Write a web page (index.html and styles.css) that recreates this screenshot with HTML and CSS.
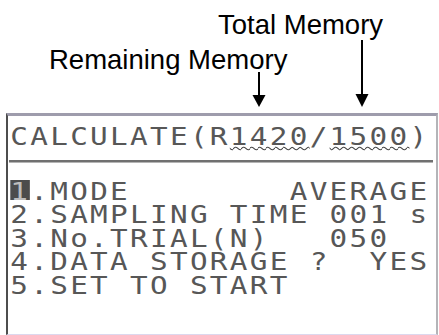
FILE: index.html
```html
<!DOCTYPE html>
<html>
<head>
<meta charset="utf-8">
<link rel="stylesheet" href="styles.css">
</head>
<body>
<div class="header">
  <div class="label label-total">Total Memory</div>
  <div class="label label-remaining">Remaining Memory</div>
  <svg class="arrows" width="439" height="113" viewBox="0 0 439 113">
    <line x1="259" y1="72" x2="259" y2="96" stroke="#000" stroke-width="2"/>
    <polygon points="252.5,95 265.5,95 259,107" fill="#000"/>
    <line x1="362" y1="40" x2="362" y2="95" stroke="#000" stroke-width="2"/>
    <polygon points="355.5,94 368.5,94 362,107" fill="#000"/>
  </svg>
</div>
<div class="screen">
  <div class="line title">CALCULATE(R<span class="mem">1420</span>/<span class="mem">1500</span>)</div>
  <div class="sep"></div>
  <div class="menu">
    <div class="line"><span class="cursor">1</span>.MODE        AVERAGE</div>
    <div class="line">2.SAMPLING TIME 001 s</div>
    <div class="line">3.No.TRIAL(N)   050</div>
    <div class="line">4.DATA STORAGE ?  YES</div>
    <div class="line">5.SET TO START</div>
  </div>
</div>
</body>
</html>
```

FILE: styles.css
```css
html, body {
  margin: 0;
  padding: 0;
  background: #fff;
}
body {
  width: 439px;
  height: 335px;
  overflow: hidden;
}
.header {
  position: relative;
  height: 113px;
  padding-top: 7px;
  box-sizing: border-box;
  font-family: "Liberation Sans", Arial, sans-serif;
  font-size: 27.5px;
  line-height: 35px;
  color: #000;
}
.label-total {
  margin-left: 218px;
}
.label-remaining {
  margin-left: 49px;
}
.arrows {
  position: absolute;
  left: 0;
  top: 0;
}
.screen {
  margin-left: 6px;
  width: 432px;
  height: 222px;
  box-sizing: border-box;
  overflow: hidden;
  border-top: 3px solid #9e9cac;
  border-left: 2px solid #4e4e4e;
  border-right: 2px solid #b4b4b8;
  border-bottom: 1px solid #dcd8ee;
  padding-top: 9px;
  font-family: "DejaVu Sans Mono", monospace;
  font-size: 25.5px;
  color: #575757;
}
.line {
  width: 366px;
  white-space: pre;
  line-height: 23.5px;
  letter-spacing: 2px;
  padding-left: 2px;
  transform: scaleX(1.15);
  transform-origin: 0 0;
}
.mem {
  text-decoration: underline wavy #444;
  text-decoration-thickness: 1px;
  text-underline-offset: 1px;
}
.sep {
  margin: 11px 3px 0 1px;
  height: 2px;
  background: #707070;
  border-bottom: 1px solid #b4b4b4;
}
.menu {
  margin-top: 17px;
}
.cursor {
  color: #bdbdbd;
  background: linear-gradient(#4c4c4c, #4c4c4c) no-repeat;
  background-size: 100% 20px;
  background-position: 0 4px;
}
```
